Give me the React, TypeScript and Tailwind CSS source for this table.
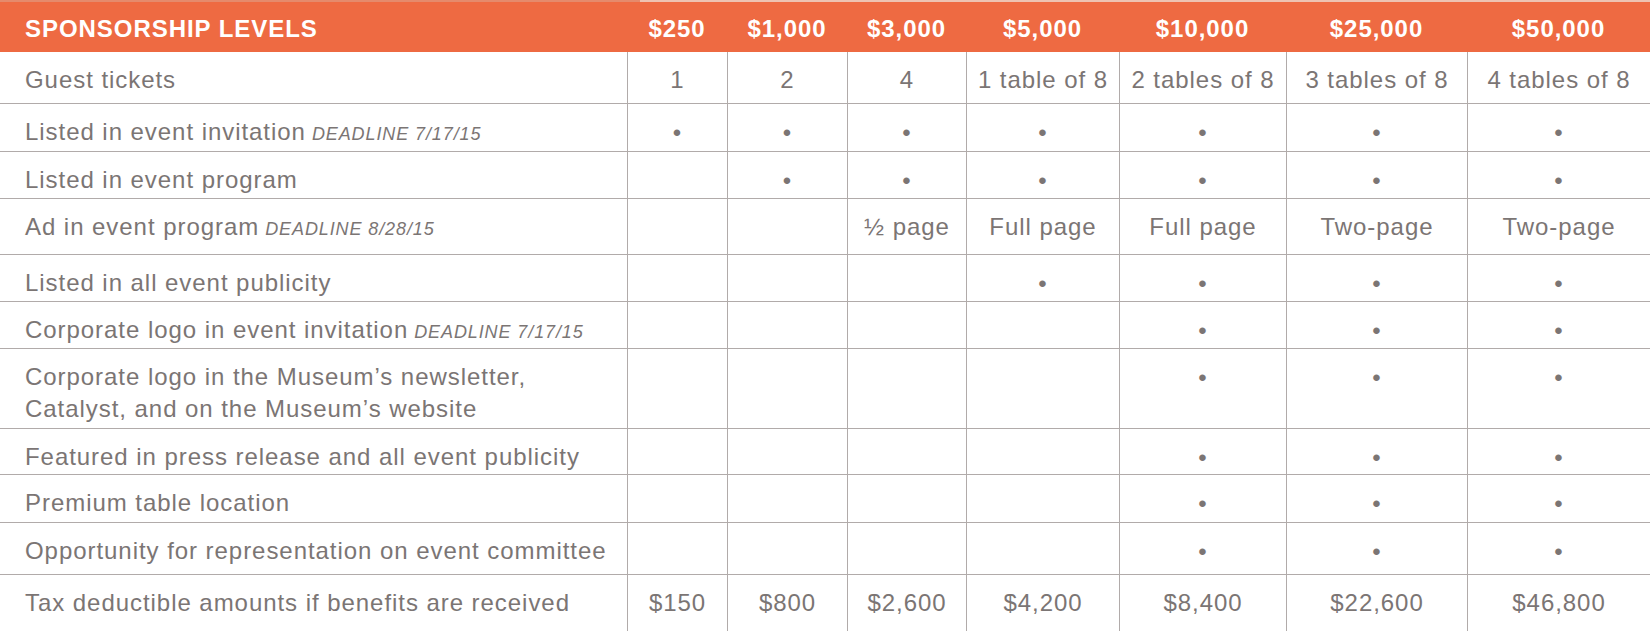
import React from "react";

type Row = {
  label: string;
  deadline?: string;
  cells: string[];
  height: string;
  wrap?: boolean;
};

const DOT = "•";

const levels = ["$250", "$1,000", "$3,000", "$5,000", "$10,000", "$25,000", "$50,000"];

const rows: Row[] = [
  { label: "Guest tickets", cells: ["1", "2", "4", "1 table of 8", "2 tables of 8", "3 tables of 8", "4 tables of 8"], height: "h-[52px]" },
  { label: "Listed in event invitation", deadline: "DEADLINE 7/17/15", cells: [DOT, DOT, DOT, DOT, DOT, DOT, DOT], height: "h-[48px]" },
  { label: "Listed in event program", cells: ["", DOT, DOT, DOT, DOT, DOT, DOT], height: "h-[47px]" },
  { label: "Ad in event program", deadline: "DEADLINE 8/28/15", cells: ["", "", "½ page", "Full page", "Full page", "Two-page", "Two-page"], height: "h-[56px]" },
  { label: "Listed in all event publicity", cells: ["", "", "", DOT, DOT, DOT, DOT], height: "h-[47px]" },
  { label: "Corporate logo in event invitation", deadline: "DEADLINE 7/17/15", cells: ["", "", "", "", DOT, DOT, DOT], height: "h-[47px]" },
  { label: "Corporate logo in the Museum’s newsletter, Catalyst, and on the Museum’s website", cells: ["", "", "", "", DOT, DOT, DOT], height: "h-[80px]", wrap: true },
  { label: "Featured in press release and all event publicity", cells: ["", "", "", "", DOT, DOT, DOT], height: "h-[46px]" },
  { label: "Premium table location", cells: ["", "", "", "", DOT, DOT, DOT], height: "h-[48px]" },
  { label: "Opportunity for representation on event committee", cells: ["", "", "", "", DOT, DOT, DOT], height: "h-[52px]" },
  { label: "Tax deductible amounts if benefits are received", cells: ["$150", "$800", "$2,600", "$4,200", "$8,400", "$22,600", "$46,800"], height: "h-[56px]" },
];

const grid = "grid grid-cols-[627px_100px_120px_119px_153px_167px_181px_183px]";

export default function App() {
  return (
    <div className="w-[1650px] h-[631px] bg-white font-['Liberation_Sans',Arial,sans-serif] text-[#7b7574] overflow-hidden">
      {/* thin strip above the header */}
      <div className="flex h-[2px]">
        <div className="w-[640px] bg-[#e58a6c]" />
        <div className="flex-1 bg-[#eec3b2]" />
      </div>

      <div className={`${grid} h-[50px] bg-[#ee6a42] text-white font-bold text-[24px] tracking-[0.95px]`}>
        <div className="flex items-center pl-[25px] pt-[3px]">SPONSORSHIP LEVELS</div>
        {levels.map((l) => (
          <div key={l} className="flex items-center justify-center pt-[3px]">
            {l}
          </div>
        ))}
      </div>

      {rows.map((r, i) => {
        const last = i === rows.length - 1;
        return (
          <div
            key={r.label}
            className={`${grid} ${r.height} ${last ? "" : "border-b border-[#b1abaa]"} text-[24px] leading-[32px] tracking-[0.95px]`}
          >
            <div className={`pl-[25px] pt-[12px] ${r.wrap ? "pr-[40px]" : "whitespace-nowrap"}`}>
              {r.label}
              {r.deadline && (
                <span className="ml-[6px] text-[18px] italic tracking-[0.9px]">{r.deadline}</span>
              )}
            </div>
            {r.cells.map((c, j) =>
              c === DOT ? (
                <div key={j} className="border-l border-[#b1abaa] pt-[13px] text-center text-[24px]">
                  {DOT}
                </div>
              ) : (
                <div key={j} className="border-l border-[#b1abaa] pt-[12px] text-center whitespace-nowrap">
                  {c}
                </div>
              )
            )}
          </div>
        );
      })}
    </div>
  );
}
